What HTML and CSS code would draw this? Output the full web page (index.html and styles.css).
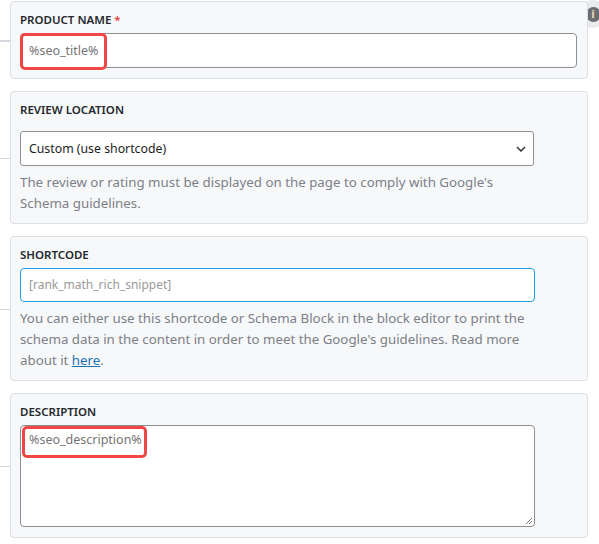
FILE: index.html
```html
<!DOCTYPE html>
<html lang="en">
<head>
<meta charset="utf-8">
<title>Schema fields</title>
<link rel="stylesheet" href="styles.css">
</head>
<body>
<div class="help-dot"><span>i</span></div>
<main class="fields">
  <section class="panel">
    <label class="label">Product Name <span class="req">*</span></label>
    <div class="control">
      <div class="input">%seo_title%</div>
      <span class="mark mark-title"></span>
    </div>
  </section>

  <section class="panel panel-tight">
    <label class="label">Review Location</label>
    <div class="select">
      <span>Custom (use shortcode)</span>
      <svg class="chev" width="10" height="6" viewBox="0 0 10 6"><path d="M1 1l4 4 4-4" fill="none" stroke="#333" stroke-width="1.5"/></svg>
    </div>
    <p class="help">The review or rating must be displayed on the page to comply with Google's Schema guidelines.</p>
  </section>

  <section class="panel panel-tight">
    <label class="label">Shortcode</label>
    <div class="input input-focus">[rank_math_rich_snippet]</div>
    <p class="help">You can either use this shortcode or Schema Block in the block editor to print the schema data in the content in order to meet the Google's guidelines. Read more about it <a href="#">here</a>.</p>
  </section>

  <section class="panel">
    <label class="label">Description</label>
    <div class="control">
      <div class="textarea">%seo_description%
        <svg class="grip" width="8" height="8" viewBox="0 0 8 8"><path d="M7 1L1 7M7 4L4 7" stroke="#777" stroke-width="1"/></svg>
      </div>
      <span class="mark mark-desc"></span>
    </div>
  </section>
</main>
</body>
</html>
```

FILE: styles.css
```css
* { box-sizing: border-box; }
html, body { margin: 0; padding: 0; background: #fff; }
body {
  font-family: "Noto Sans", "Open Sans", sans-serif;
  color: #1d2327;
  position: relative;
  width: 599px;
  height: 544px;
  overflow: hidden;
}
.help-dot {
  position: absolute;
  left: 580px;
  top: 0;
  width: 26px;
  height: 28px;
  border-radius: 50%;
  background: #e9eaec;
  display: flex;
  align-items: center;
  justify-content: center;
  z-index: 0;
}
.help-dot span {
  width: 15px;
  height: 15px;
  border-radius: 50%;
  background: #6b6e72;
  color: #e8d9b0;
  font: bold 10px/15px "DejaVu Sans", sans-serif;
  text-align: center;
}
.fields {
  position: relative;
  z-index: 1;
  display: flex;
  flex-direction: column;
  gap: 12px;
  padding: 1px 0 0 10px;
}
.panel {
  position: relative;
  width: 578px;
  background: #f7f8fa;
  border: 1px solid #dcdfe3;
  border-radius: 4px;
  padding: 10px 10px 10px 9px;
}
.panel-tight { padding-bottom: 9px; }
.panel::before {
  content: "";
  position: absolute;
  left: -11px;
  top: 50%;
  width: 10px;
  height: 1.5px;
  background: #d5d8dc;
}
.label {
  display: block;
  font-size: 11.5px;
  font-weight: 600;
  line-height: 16px;
  text-transform: uppercase;
  color: #23282d;
  margin-bottom: 5px;
}
.req { color: #e0443c; }
.control { position: relative; }
.input {
  height: 35px;
  border: 1px solid #8c8f94;
  border-radius: 4px;
  background: #fff;
  padding: 0 8px;
  font-size: 12.5px;
  line-height: 33px;
  color: #757575;
}
.input-focus {
  width: 515px;
  height: 34px;
  line-height: 32px;
  font-size: 12px;
  border-color: #1ea0e6;
  color: #9a9a9a;
}
.select {
  margin-top: 13px;
  width: 514px;
  height: 35px;
  border: 1px solid #8c8f94;
  border-radius: 3px;
  background: #fff;
  padding: 0 7px 0 8px;
  display: flex;
  align-items: center;
  justify-content: space-between;
  font-size: 12.3px;
  color: #1d1d1d;
}
.chev { margin-top: 1px; }
.help {
  margin: 6px 0 0;
  max-width: 515px;
  font-size: 13.3px;
  line-height: 21px;
  color: #7c8087;
}
.help a { color: #2271b1; }
.textarea {
  position: relative;
  width: 515px;
  height: 102px;
  border: 1px solid #8c8f94;
  border-radius: 4px;
  background: #fff;
  padding: 4px 8px;
  font-size: 12.5px;
  line-height: 20px;
  color: #757575;
}
.grip { position: absolute; right: 1px; bottom: 1px; }
.mark {
  position: absolute;
  border: 3px solid #f04646;
  border-radius: 5px;
  pointer-events: none;
}
.mark-title { left: 0; top: 0; width: 87px; height: 37px; }
.mark-desc { left: 2px; top: 1px; width: 125px; height: 32px; }
```
